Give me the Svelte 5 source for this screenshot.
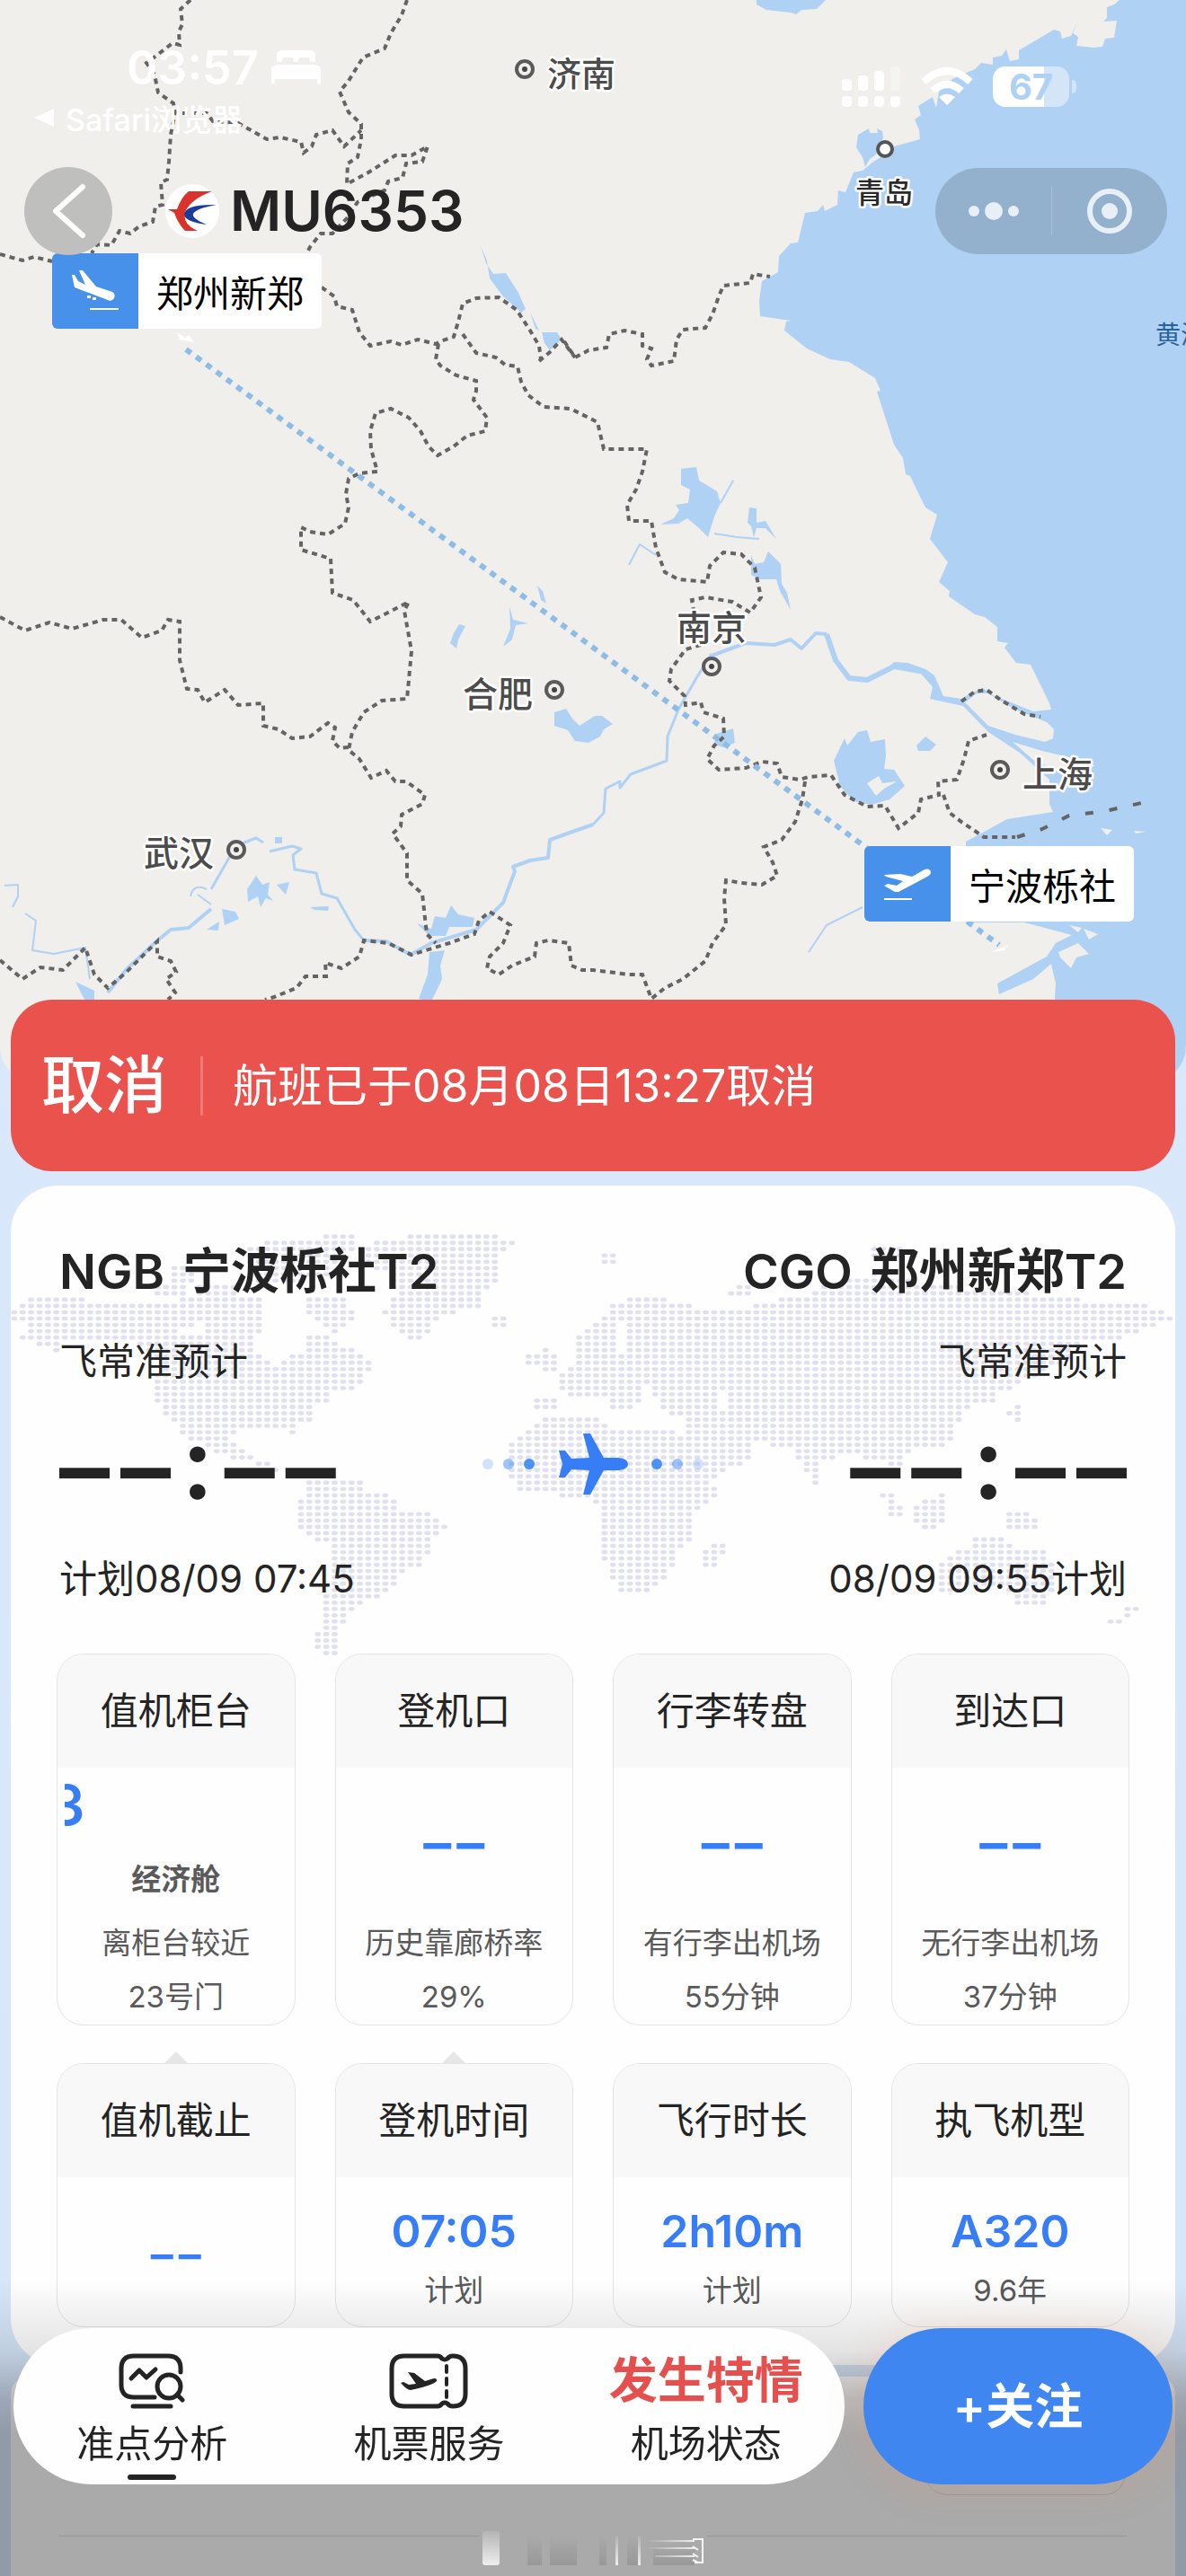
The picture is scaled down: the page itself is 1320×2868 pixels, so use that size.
<script lang="ts">
  type Tile = { title: string; value: string; cabin?: string; notes: string[]; marquee?: boolean; pointer?: boolean };

  const firstRow: Tile[] = [
    { title: '值机柜台', value: '3', cabin: '经济舱', notes: ['离柜台较近', '23号门'], marquee: true },
    { title: '登机口', value: '', notes: ['历史靠廊桥率', '29%'] },
    { title: '行李转盘', value: '', notes: ['有行李出机场', '55分钟'] },
    { title: '到达口', value: '', notes: ['无行李出机场', '37分钟'] }
  ];
  const secondRow: Tile[] = [
    { title: '值机截止', value: '', notes: [], pointer: true },
    { title: '登机时间', value: '07:05', notes: ['计划'], pointer: true },
    { title: '飞行时长', value: '2h10m', notes: ['计划'] },
    { title: '执飞机型', value: 'A320', notes: ['9.6年'] }
  ];

  const cities = [
    { name: '济南', x: 609, y: 96, cx: 584, cy: 77, size: 38 },
    { name: '南京', x: 753, y: 713, cx: 792, cy: 742, size: 39 },
    { name: '上海', x: 1138, y: 876, cx: 1113, cy: 857, size: 39 },
    { name: '合肥', x: 515, y: 787, cx: 617, cy: 768, size: 39 },
    { name: '武汉', x: 160, y: 964, cx: 263, cy: 946, size: 39 }
  ];

  const borders = [
    '212,0 201,10 203,27 199,35 200,50 192,48 170,65 163,70 172,83 176,103 193,115 195,125 190,150 188,180 186,200 179,203 181,228 173,230 170,247 155,252 145,260 133,257 124,273 108,272 102,282',
    '203,126 230,126 237,135 265,137 297,155 312,153 335,158 338,170 347,163 352,150 370,145 383,163 402,145',
    '453,0 447,17 435,37 428,54 404,64 388,90 378,102 388,125 402,138 402,155 398,175 387,182 386,205 410,192 440,173 458,173 476,163 470,180 452,182 448,198 432,202 428,212 398,225 386,243 370,260 357,260 345,275 340,285',
    '0,283 25,290 38,286 58,291',
    '358,320 372,330 375,341 392,345 400,370 412,385 435,380 447,384 465,378 485,383 490,380 505,375 510,358 515,338 530,332 555,331 575,345 590,368 600,385 602,400',
    '515,372 530,393 552,398 562,406 576,408 580,425 588,440 605,453 635,455 655,465 665,470 672,500 720,500 715,525 708,545 698,562 700,580 725,580 730,610 740,637 755,645 787,648 790,630 805,615 825,617 840,632 847,665 835,682 815,670 785,665 770,668 773,685',
    '488,383 485,400 490,407 508,418 530,424 530,435 527,445 542,465 540,480 520,485 505,497 487,507 477,497 468,480 455,465 435,455 418,460 412,480 413,500 420,525 400,527 388,533 385,550 388,565 384,583 365,595 345,592 335,587 335,612 368,622 370,660 393,668 412,692 430,683 455,670 450,680 458,725 453,778 425,780 405,793 392,815 388,835 400,845 413,866 430,858 440,870 452,870 473,885 470,895 447,907 446,920 437,928 453,950 453,980 470,995 475,1040 485,1050',
    '628,380 640,398 655,390 675,387 678,372 695,368 715,372 715,385 725,388 720,400 725,407 750,402 753,378 760,367 785,365 793,350 800,330 805,318 835,315 838,305 857,308',
    '600,402 612,392 625,378 640,398',
    '780,718 763,723 747,745 745,758 762,775 763,785 780,782 783,793 805,800 806,820 795,830 787,845 800,857 830,855 848,848 865,850 870,865 890,868 900,865 925,863 940,885 965,898 985,897 1000,922 1022,905 1025,890 1045,885 1044,870 1065,868 1073,845 1078,825 1098,818',
    '1050,885 1057,905 1070,915 1085,925 1095,932 1130,932',
    '896,870 893,890 885,915 870,935 850,943 860,960 865,975 848,985 825,983 808,980 806,1000 808,1030 793,1050 785,1070 760,1090 740,1100 725,1112 715,1085 700,1085 660,1080 648,1080 636,1075 633,1050 610,1047 597,1050 595,1065 570,1075 555,1085 542,1078 545,1065 560,1050 568,1030 545,1015 533,1025 528,1040 500,1050 458,1063 432,1050 405,1047 400,1065 380,1078 362,1072 363,1087 340,1087 330,1100 305,1110 295,1113',
    '0,687 28,702 55,693 80,700 115,690 135,690 158,710 180,702 187,690 200,692 200,735 208,767 220,768 228,782 250,768 265,785 293,783 293,808 310,812 325,822 345,820 365,805 373,810 370,825 378,833 388,832',
    '0,1069 25,1090 45,1077 70,1080 95,1055 105,1085 120,1100 140,1083 175,1048 175,1065 190,1070 196,1082 185,1090 195,1105 187,1113',
    '1070,781 1085,770 1098,768 1115,780 1140,795 1158,798'
  ];

  // Outlines that decide which dots of the world map are drawn.
  const lands = [
    '90,728 210,728 260,742 440,744 520,728 690,728 700,800 660,850 720,880 740,900 760,865 810,860 815,815 880,820 900,850 950,855 985,890 950,945 880,950 870,978 825,985 820,1022 785,1030 775,1062 760,1050 700,1040 640,1045 600,1060 640,1090 700,1115 745,1145 760,1172 740,1160 700,1130 650,1112 600,1110 545,1085 500,1062 470,1040 430,1000 410,980 410,920 430,890 380,850 330,832 170,832 150,860 110,848 55,828 85,806 28,780 50,744',
    '405,695 500,695 500,725 405,725',
    '450,655 525,655 525,695 450,695',
    '520,695 640,695 640,728 520,728',
    '650,610 750,594 950,580 940,620 900,640 860,680 760,700 650,690',
    '800,725 900,725 940,775 890,815 820,770',
    '960,615 1000,600 1100,582 1300,580 1365,600 1315,625 1325,690 1275,722 1265,755 1155,778 1120,828 1080,828 1035,795 1015,765 1045,720 1030,680 970,650',
    '1280,770 1340,770 1345,798 1305,798',
    '815,1160 965,1158 970,1188 1030,1190 1050,1210 1060,1232 1120,1235 1192,1268 1155,1290 1145,1330 1115,1362 1065,1375 1055,1405 1005,1435 970,1452 935,1468 915,1495 890,1515 895,1575 855,1572 832,1555 835,1520 855,1500 860,1430 880,1400 880,1320 835,1312 785,1275 785,1220 810,1200',
    '1440,1010 1580,1008 1620,1040 1790,1040 1840,1120 1860,1175 1905,1175 1900,1200 1850,1232 1832,1258 1832,1315 1790,1322 1785,1362 1770,1380 1745,1420 1645,1425 1615,1385 1590,1345 1588,1240 1568,1210 1480,1198 1380,1190 1345,1155 1345,1075 1410,1040',
    '1865,1318 1930,1305 1900,1368 1860,1378',
    '1412,962 1495,962 1475,992 1412,992',
    '1390,875 1440,845 1480,882 1465,905 1400,892',
    '1525,828 1568,795 1600,775 1620,745 1690,728 1745,728 1810,748 1870,762 1960,762 2020,745 2060,735 2140,728 2150,712 2240,690 2330,668 2400,690 2560,708 2740,722 2865,732 2870,742 3045,744 3045,758 3108,775 3108,786 3020,802 3010,815 2960,830 2880,828 2830,870 2760,912 2660,950 2620,978 2560,990 2540,1005 2528,1070 2490,1085 2400,1095 2385,1130 2345,1122 2290,1110 2230,1095 2160,1130 2168,1170 2150,1168 2110,1110 2080,1080 2020,1078 1985,1075 1990,1105 1940,1132 1900,1160 1850,1180 1800,1060 1805,1010 1730,1000 1720,965 1690,975 1670,1000 1620,990 1620,960 1560,965 1490,965 1478,930 1455,925 1495,905 1530,870',
    '2320,1185 2370,1190 2395,1260 2350,1240',
    '2420,1228 2450,1205 2515,1185 2505,1250 2470,1275 2418,1272',
    '2660,1232 2725,1238 2750,1278 2665,1275',
    '2500,1345 2550,1325 2590,1292 2660,1292 2690,1325 2765,1325 2785,1370 2795,1410 2765,1452 2690,1455 2650,1412 2560,1415 2500,1438 2478,1400 2478,1352',
    '2975,1452 3020,1455 2970,1495 2920,1515 2905,1502 2960,1485',
    '2640,1010 2690,980 2715,985 2690,1022',
    '1568,620 1630,620 1635,665 1600,655',
    '1930,710 1990,690 2000,725 1930,728',
    '2300,608 2380,608 2380,640 2300,640'
  ].map(parse);
  const seas = ['1635,795 1655,795 1660,870 1625,860', '1700,935 1730,940 1735,990 1700,990', '1905,950 1930,950 1935,985 1908,990', '480,800 530,795 540,815 480,815'].map(parse);

  function parse(points: string): number[][] {
    return points.split(' ').map((p) => p.split(',').map(Number));
  }
  function inside(x: number, y: number, poly: number[][]): boolean {
    let hit = false;
    for (let i = 0, j = poly.length - 1; i < poly.length; j = i++) {
      const [xi, yi] = poly[i];
      const [xj, yj] = poly[j];
      if (yi > y !== yj > y && x < ((xj - xi) * (y - yi)) / (yj - yi) + xi) hit = !hit;
    }
    return hit;
  }
  const dots: { x: number; y: number }[] = [];
  for (let y = 587; y < 1580; y += 14.9) {
    for (let x = 38; x < 3110; x += 22.3) {
      if (lands.some((l) => inside(x, y, l)) && !seas.some((s) => inside(x, y, s))) dots.push({ x, y });
    }
  }
</script>

{#snippet tile(t: Tile)}
  <article class="tile" class:pointer={t.pointer}>
    <h3>{t.title}</h3>
    <div class="body">
      {#if t.marquee}
        <div class="marquee"><strong>{t.value}</strong></div>
      {:else if t.value}
        <strong class="value">{t.value}</strong>
      {:else}
        <strong class="value empty"><span>–</span><span>–</span></strong>
      {/if}
      {#if t.cabin}<b class="cabin">{t.cabin}</b>{/if}
      {#each t.notes as note}<p>{note}</p>{/each}
    </div>
  </article>
{/snippet}

{#snippet noTime()}
  <p class="time"><span>–</span><span>–</span><span>:</span><span>–</span><span>–</span></p>
{/snippet}

<div class="page">
  <header class="hero">
    <div class="map">
      <svg viewBox="0 0 1320 1205" preserveAspectRatio="xMidYMin slice" aria-label="航线地图">
        <rect width="1320" height="1205" fill="#f0efeb" />
        <g fill="#afd1f4">
          <path d="M842 0V5L853 11 880 14 886 16 892 11 909 10 919 0Z" />
          <path d="M1246 0L1240 5 1232 8V20L1228 24 1243 23 1240 42 1230 43 1227 52 1217 53 1198 51 1200 41 1194 37 1200 22 1192 40 1182 43 1180 35 1173 33 1134 56V66L1124 68 1120 55 1115 62 1105 64V72L1092 70 1085 77 1060 88 1045 102 1042 120 1038 108 1022 118 1025 128 1018 133 1023 145 1024 155 995 163 985 172 972 180 960 190 950 192 941 214 933 212 932 228 918 235 916 228 910 235 896 237 888 270 880 271 867 285 866 303 848 313 845 335 846 352 880 357 875 358 873 368 898 388 924 400 945 403 974 421 980 435 976 436 995 495 1005 510 1008 528 1013 530 1030 565 1043 573 1035 600 1055 626 1045 648 1057 658 1056 664 1085 684 1096 687 1110 698V714L1122 716 1118 721 1131 738 1147 740 1168 783 1170 790 1150 792 1105 774 1094 766 1080 772 1070 778 1050 775 1040 752 1030 745 1010 738 995 737 990 742 1010 745 1025 750 1038 765 1035 778 1072 786 1100 815 1135 838 1168 868 1168 895 1172 904 1121 912 1075 937V1027H1140L1193 1041 1175 1050 1165 1065 1110 1095 1112 1107 1150 1090 1170 1073 1175 1095 1168 1205H1320V0Z" />
          <path d="M955 186L953 200 960 211 963 222 968 213 975 208 978 196 983 190 982 182 976 179 977 184 968 184 967 179Z" transform="translate(0 -36)" />
          <path d="M758 522L775 520 778 535 798 547 802 560 795 575 788 598 778 588 765 577 755 583 735 584 750 577 756 568 752 562 766 560 768 545 758 540Z" />
          <path d="M834 565L842 566 842 582 852 580 864 600 852 588 842 588 839 598 836 586 832 582ZM836 618L840 628 850 626 855 614 869 628 870 650 876 660 880 679 868 658 864 645 846 645 836 640Z" />
          <path d="M928 847L940 822 943 830 955 815 965 813 969 826 985 823 986 842 984 856 995 857 1007 875 990 890 970 896 950 892 935 875Z" />
          <path d="M617 793L630 789 637 800 645 808 662 797 670 797 682 806 672 812 668 820 655 827 640 825 632 813 617 808Z" />
          <path d="M797 817L816 811 818 827 805 832 795 829ZM1020 830L1030 820 1042 829 1035 836 1022 836Z" />
          <path d="M535 274L542 290 545 310 560 330 580 348 585 344 577 326 570 315 563 304 549 305 541 293ZM603 370L620 370 625 378 612 390 606 382ZM590 348L600 368 596 366Z" />
          <path d="M505 705L511 695 518 697 510 712 508 722 501 716ZM567 675L571 690 588 694 574 696 570 712 560 720 568 700ZM598 652L604 658 608 672 602 668Z" />
          <path d="M464 1028L480 1034 484 1020 496 1022 502 1008 510 1018 528 1022 526 1032 500 1032 496 1042 478 1042ZM478 1060L495 1058 490 1075 492 1090 480 1115 466 1112 476 1085Z" />
          <path d="M275 990L285 975 292 985 300 982 298 996 304 1003 296 1000 290 1010 287 998 276 1004ZM308 985L322 982 318 996ZM247 1012L262 1015 266 1023 250 1030ZM230 1035L244 1026 243 1036ZM306 932H314V939H306ZM345 1010L366 1009 365 1014 350 1013ZM84 1093L105 1103V1115H95Z" />
        </g>
        <g fill="none" stroke="#afd1f4" stroke-width="3" stroke-linejoin="round">
          <path stroke-width="4" d="M120 1105L140 1080 172 1050 190 1035 210 1033 235 1012M300 903" />
          <path d="M235 990L255 955 272 938 285 933 293 938M300 902M300 948L325 942 335 945 326 952 328 968 352 972 358 995 375 1000 395 1035 405 1047" />
          <path stroke-width="4" d="M405 1047L430 1048 457 1063 480 1050 530 1035 560 1005 573 970 571 965 590 958 610 955 612 935 640 925 660 918" />
          <path stroke-width="2" d="M5 986L20 985 20 998 14 1010M28 1017L40 1025 36 1058 60 1062 95 1055 100 1090M212 998Q215 983 230 990M220 996L235 1007" />
          <path stroke-width="3" d="M660 918L672 905 674 878 690 870 690 877 702 862 742 847 743 820 755 790 775 755 792 728" />
          <path stroke-width="2" d="M795 594L820 598 845 600M700 629L712 606 730 618M802 560L816 535M900 1060L920 1030 960 1010" />
          <path stroke-width="4" d="M792 730L830 716 862 718 880 712 892 722 908 705 920 706" />
          <path stroke-width="6" d="M920 706L930 735 945 755 965 757 995 742 1030 748" />
        </g>
        <g fill="#f0efeb">
          <path d="M1074 782L1087 772 1100 772 1130 790 1165 804 1173 812 1172 822 1163 826 1130 818 1100 808Z" />
          <path d="M1127 826L1160 836 1190 843 1218 852 1205 864 1180 860 1150 846Z" />
          <path d="M965 872L978 864 982 872 998 870 984 878 975 886ZM1225 922L1238 924 1232 930ZM1262 925L1275 926 1264 928ZM1178 1060L1200 1050 1212 1062 1198 1066 1192 1078 1180 1066ZM1206 1034L1222 1040 1212 1046ZM1190 1030L1204 1033 1200 1038Z" />
        </g>
        <g class="borders">
          {#each borders as points}<polyline {points} />{/each}
          <polyline points="1132,932 1160,923 1190,908 1230,903 1275,893" stroke-dasharray="9 18" />
        </g>
        <line x1="207" y1="389" x2="1112" y2="1052" stroke="#8dbce6" stroke-width="6" stroke-dasharray="7 7" />
        <g class="places">
          {#each cities as c}
            <circle cx={c.cx} cy={c.cy} r="9" fill="#f0efeb" stroke="#5a5a5a" stroke-width="4" />
            <circle cx={c.cx} cy={c.cy} r="3" fill="#444" />
            <text x={c.x} y={c.y} font-size={c.size}>{c.name}</text>
          {/each}
          <circle cx="985" cy="166" r="8" fill="#fff" stroke="#555" stroke-width="4" />
          <text class="dark" x="952" y="226" font-size="32">青岛</text>
          <text class="sea" x="1286" y="383" font-size="28">黄海</text>
        </g>
        <path d="M197 370L206 376 210 373 216 381 200 378ZM1104 1060L1122 1052 1118 1058Z" fill="#fff" />
      </svg>
      <div class="pin arrival">
        <svg viewBox="0 0 96 84" aria-hidden="true">
          <path d="M22 24L25 38 62 52a5 5 0 0 0 5-9L49 37 34 19 30 19 37 35 29 31 25 24Z" fill="#fff" />
          <path d="M39 47h4v3h-4zM45 49h4v3h-4zM42 61h32v2h-32z" fill="#fff" />
        </svg>
        <span>郑州新郑</span>
      </div>
      <div class="pin departure">
        <svg viewBox="0 0 96 84" aria-hidden="true">
          <path d="M22 32L40 31 53 34 67 26Q73 24 74 29Q74 32 70 34L38 51 34 51 22 44 26 42 36 44 43 39 24 34Z" fill="#fff" />
          <path d="M22 58h31v2h-31z" fill="#fff" />
        </svg>
        <span>宁波栎社</span>
      </div>
    </div>

    <div class="chrome">
      <div class="status">
        <div class="left">
          <div class="clock">
            <time>03:57</time>
            <svg width="55" height="38" viewBox="0 0 55 38" fill="#fff" aria-label="睡眠模式">
              <path d="M6 13V6Q6 0 12 0H43Q49 0 49 6V13H43V11Q43 8 40 8H33Q30 8 30 11V13H25V11Q25 8 22 8H15Q12 8 12 11V13Z" />
              <path d="M6 16H49Q55 16 55 22V36Q55 38 53 38T51 36V32H4V36Q4 38 2 38T0 36V22Q0 16 6 16Z" />
            </svg>
          </div>
          <a class="return" href="#safari"><svg width="22" height="20" viewBox="0 0 22 20" aria-hidden="true"><path d="M0 10L22 0V20Z" fill="#fff" /></svg>Safari浏览器</a>
        </div>
        <div class="right">
          <svg width="66" height="46" viewBox="0 0 66 46" fill="#fff" aria-label="信号">
            <rect y="14" width="11" height="13" rx="4" /><rect x="18" y="10" width="11" height="17" rx="4" /><rect x="36" y="5" width="11" height="22" rx="4" />
            <rect x="54" width="11" height="27" rx="4" opacity="0.3" />
            <rect y="33" width="11" height="12" rx="4" /><rect x="18" y="33" width="11" height="12" rx="4" /><rect x="36" y="33" width="11" height="12" rx="4" /><rect x="54" y="33" width="11" height="12" rx="4" />
          </svg>
          <svg width="60" height="46" viewBox="0 0 60 46" fill="none" stroke="#fff" stroke-width="8" aria-label="无线网络">
            <path d="M4 17Q30 -7 56 17" /><path d="M14 27Q30 13 46 27" />
            <path d="M21 34Q30 27 39 34L30 43Z" fill="#fff" stroke="none" />
          </svg>
          <div class="battery"><span>67</span></div>
        </div>
      </div>

      <nav class="nav">
        <button class="back" aria-label="返回">
          <svg width="40" height="66" viewBox="0 0 40 66" fill="none" stroke="#fff" stroke-width="6" stroke-linecap="round" stroke-linejoin="round"><path d="M36 6L6 33 36 60" /></svg>
        </button>
        <svg class="logo" viewBox="0 0 60 60" aria-label="中国东方航空">
          <circle cx="30" cy="30" r="30" fill="#fff" />
          <path d="M3 28H13Q18 14 26 8H52Q30 16 23 29Q17 44 36 52H22Q14 44 10 32Z" fill="#d9332b" />
          <path d="M57 23Q22 22 21 34Q22 42 46 45Q29 38 31 33Q34 27 57 23Z" fill="#1b3c98" />
        </svg>
        <h1>MU6353</h1>
        <div class="capsule">
          <button aria-label="更多"><svg width="60" height="54" viewBox="0 0 60 54" fill="#e8eff7"><circle cx="8" cy="27" r="6" /><circle cx="30" cy="27" r="10" /><circle cx="52" cy="27" r="6" /></svg></button>
          <button aria-label="关闭"><svg width="54" height="54" viewBox="0 0 54 54"><circle cx="27" cy="27" r="22" fill="none" stroke="#e8eff7" stroke-width="6" /><circle cx="27" cy="27" r="9" fill="#e8eff7" /></svg></button>
        </div>
      </nav>
    </div>
  </header>

  <main>
    <section class="banner">
      <h2>取消</h2>
      <p>航班已于08月08日13:27取消</p>
    </section>

    <section class="card">
      <svg class="world" viewBox="29 575 3079 1005" preserveAspectRatio="none" aria-hidden="true">
        {#each dots as d}<ellipse cx={d.x} cy={d.y} rx="8" ry="5" />{/each}
      </svg>
      <div class="route">
        <div class="end">
          <h2><span>NGB</span><span>宁波栎社T2</span></h2>
          <p class="source">飞常准预计</p>
          {@render noTime()}
          <p class="plan">计划08/09 07:45</p>
        </div>
        <svg class="plane" width="248" height="70" viewBox="0 0 248 70" aria-hidden="true">
          <g fill="#4a93f5">
            <circle cx="7" cy="34" r="6" opacity="0.25" /><circle cx="30" cy="34" r="6" opacity="0.55" /><circle cx="53" cy="34" r="6" />
            <circle cx="195" cy="34" r="6" /><circle cx="218" cy="34" r="6" opacity="0.55" /><circle cx="241" cy="34" r="6" opacity="0.25" />
          </g>
          <path transform="translate(86 0)" d="M77 34Q77 40 66 41H50L35 68H27L34 41 14 40 7 49H0L4 34 0 19H7L14 28 34 27 27 0H35L50 27H66Q77 28 77 34Z" fill="#377df6" />
        </svg>
        <div class="end to">
          <h2><span>CGO</span><span>郑州新郑T2</span></h2>
          <p class="source">飞常准预计</p>
          {@render noTime()}
          <p class="plan">08/09 09:55计划</p>
        </div>
      </div>
      <div class="tiles tall">
        {#each firstRow as t}{@render tile(t)}{/each}
      </div>
      <div class="tiles">
        {#each secondRow as t}{@render tile(t)}{/each}
      </div>
    </section>

    <section class="card next">
      <div class="chip"></div>
      <div class="rule">
        <hr />
        <svg width="254" height="48" viewBox="0 0 254 48" aria-hidden="true">
          <defs>
            <linearGradient id="bar" x1="0" y1="0" x2="0" y2="1"><stop offset="0" stop-color="#b4b4b4" /><stop offset="1" stop-color="#eee" /></linearGradient>
            <linearGradient id="smear" x1="0" y1="0" x2="0" y2="1"><stop offset="0" stop-color="#ababab" /><stop offset="1" stop-color="#989898" /></linearGradient>
            <linearGradient id="streak"><stop offset="0" stop-color="#ababab" /><stop offset="1" stop-color="#eee" /></linearGradient>
          </defs>
          <rect x="4" y="4" width="19" height="38" rx="3" fill="url(#bar)" />
          <rect x="54" y="8" width="16" height="34" fill="url(#smear)" /><rect x="79" y="8" width="30" height="34" fill="url(#smear)" />
          <rect x="134" y="8" width="8" height="34" fill="url(#smear)" /><rect x="165" y="8" width="12" height="34" fill="url(#smear)" /><rect x="194" y="16" width="46" height="26" fill="url(#smear)" />
          <rect x="152" y="10" width="3" height="32" fill="url(#bar)" /><rect x="177" y="10" width="3" height="32" fill="url(#bar)" />
          <path d="M188 14h52v2h-52zM188 22h52v2h-52zM196 31h44v2h-44z" fill="url(#streak)" />
          <path d="M238 13h11v26h-9M238 21l6 4M238 29l6 4M238 36l6 3" fill="none" stroke="#f5f5f5" stroke-width="2" />
        </svg>
        <hr />
      </div>
    </section>
  </main>

  <div class="shade"></div>
  <footer class="dock">
    <div class="menu">
      <button class="active">
        <svg width="74" height="62" viewBox="0 0 74 62" fill="none" stroke="#242424" stroke-width="5" stroke-linecap="round" stroke-linejoin="round" aria-hidden="true">
          <path d="M40 49H17Q3 49 3 35V17Q3 3 17 3H55Q69 3 69 17V21" /><path d="M14 28L23 19 31 27 41 18" /><circle cx="56" cy="37" r="13" /><path d="M65 46L71 52M16 59H58" />
        </svg>
        <span>准点分析</span>
      </button>
      <button>
        <svg width="88" height="62" viewBox="0 0 88 62" fill="none" stroke="#242424" stroke-width="5" stroke-linecap="round" stroke-linejoin="round" aria-hidden="true">
          <path d="M17 3H54Q57 3 59 6Q62 8 65 6Q67 3 71 3Q85 3 85 17V45Q85 59 71 59Q67 59 65 56Q62 54 59 56Q57 59 54 59H17Q3 59 3 45V17Q3 3 17 3Z" />
          <path d="M64 14V21M64 28V35M64 42V49" stroke-width="4" />
          <path d="M21 21L28 22 40 31 50 28Q54 28 53 31Q48 36 24 41Q20 41 13 33L16 32 22 35 30 34Z" fill="#242424" stroke="none" />
        </svg>
        <span>机票服务</span>
      </button>
      <button>
        <b>发生特情</b>
        <span>机场状态</span>
      </button>
    </div>
    <button class="follow">+关注</button>
  </footer>
</div>

<style>
  :global(body) { margin: 0; background: #dbe9fb; }
  .page {
    display: flex; flex-direction: column; min-height: 100vh; overflow: hidden;
    font-family: Inter, "Noto Sans CJK SC", sans-serif; color: #242424;
    background: linear-gradient(#dce8fb, #d6e7fa);
  }
  h1, h2, h3, p { margin: 0; font-weight: 400; }
  button { border: 0; padding: 0; background: none; font: inherit; color: inherit; cursor: pointer; }
  svg { display: block; flex: none; }

  .hero { display: grid; }
  .map, .chrome { grid-area: 1 / 1; }
  .map { position: relative; overflow: hidden; border-radius: 0 0 40px 40px; }
  .map > svg { width: 100%; height: auto; }
  .borders { fill: none; stroke: #646464; stroke-width: 4; stroke-dasharray: 6 5; }
  .places { font-weight: 500; fill: #4c4c4c; }
  .places text { stroke: #fff; stroke-width: 5; paint-order: stroke; stroke-linejoin: round; }
  .places .dark { fill: #2a2a2a; }
  .places .sea { fill: #2a639b; stroke: none; font-weight: 400; }

  .pin { position: absolute; display: flex; align-items: center; width: 300px; height: 84px; border-radius: 6px; overflow: hidden; background: #fff; color: #000; font-size: 41px; }
  .pin svg { width: 96px; height: 84px; background: #4791ea; }
  .pin span { flex: 1; text-align: center; }
  .arrival { left: 58px; top: 282px; }
  .departure { left: 962px; top: 942px; }

  .chrome { z-index: 1; color: #fff; height: 284px; }
  .status { display: flex; justify-content: space-between; height: 186px; box-sizing: border-box; padding: 45px 130px 0 38px; }
  .clock { display: flex; align-items: center; gap: 14px; height: 60px; padding-left: 103px; font-size: 52px; font-weight: 600; }
  .return { display: flex; align-items: center; gap: 13px; height: 52px; color: #fff; font-size: 34px; font-weight: 500; text-decoration: none; }
  .right { display: flex; align-items: flex-start; gap: 21px; padding-top: 29px; }
  .battery { position: relative; width: 85px; height: 45px; border-radius: 14px; background: linear-gradient(90deg, #fff 67%, #d5e5f8 67%); color: #afd1f4; font-size: 40px; font-weight: 700; line-height: 45px; text-align: center; }
  .battery::after { content: ""; position: absolute; right: -8px; top: 15px; width: 5px; height: 15px; border-radius: 0 5px 5px 0; background: #d5e5f8; }

  .nav { display: flex; align-items: center; padding: 0 21px 0 27px; }
  .back { display: grid; place-items: center; width: 98px; height: 98px; border-radius: 50%; background: #bfbfbd; }
  .logo { width: 60px; height: 60px; margin: 0 12px 0 59px; }
  .nav h1 { color: #242424; font-size: 62px; font-weight: 600; line-height: 76px; }
  .capsule { display: flex; width: 258px; height: 96px; margin-left: auto; border-radius: 48px; background: rgba(0, 0, 0, 0.155); }
  .capsule button { flex: 1; display: grid; place-items: center; }
  .capsule button + button { background: linear-gradient(rgba(255, 255, 255, 0.2), rgba(255, 255, 255, 0.2)) left center / 1px 54px no-repeat; }

  main { display: flex; flex-direction: column; flex: 1; margin-top: -92px; padding: 0 12px; }
  .banner { position: relative; display: flex; align-items: center; height: 191px; border-radius: 46px; background: #ea524e; color: #fff; }
  .banner h2 { padding: 0 37px 0 34px; font-size: 70px; line-height: 66px; font-weight: 500; border-right: 3px solid #ee7a77; }
  .banner p { padding-left: 33px; font-size: 50px; line-height: 70px; }

  .card { position: relative; margin-top: 16px; border-radius: 52px; background: #fefefe; }
  .world { position: absolute; left: 0; top: 51px; width: 100%; height: 474px; fill: #e0e0f0; }
  .route { position: relative; display: flex; justify-content: space-between; padding: 56px 54px 0; }
  .route h2 { display: flex; gap: 20px; font-size: 54px; line-height: 80px; font-weight: 600; }
  .source { font-size: 42px; line-height: 62px; margin-top: 29px; }
  .time { display: flex; gap: 12px; font-size: 112px; line-height: 130px; margin-top: 28px; font-weight: 600; font-feature-settings: "case"; }
  .plan { font-size: 42px; line-height: 62px; margin-top: 22px; }
  .to { text-align: right; }
  .to h2, .to .time { justify-content: flex-end; }
  .end { flex: 1; }
  .plane { margin-top: 220px; }

  .tiles { position: relative; display: grid; grid-template-columns: repeat(4, 1fr); gap: 44px; padding: 42px 51px; }
  .tiles.tall { padding: 52px 51px 0; }
  .tile { position: relative; box-sizing: border-box; border: 1px solid #e4e4e4; border-radius: 30px; background: #fefefe; text-align: center; }
  .tile h3 { height: 126px; border-radius: 29px 29px 0 0; background: #f8f8f8; font-size: 42px; line-height: 126px; }
  .pointer::before { content: ""; position: absolute; left: calc(50% - 14px); top: -14px; border: 14px solid transparent; border-top: 0; border-bottom-color: #e6e6e6; }
  .body { display: flex; flex-direction: column; height: 166px; box-sizing: border-box; padding-top: 22px; }
  .body strong { color: #377df6; font-weight: 600; font-feature-settings: "case"; }
  .value { font-size: 50px; line-height: 76px; }
  .empty { display: flex; justify-content: center; gap: 6px; }
  .value:only-child { line-height: 134px; }
  .body p { color: #5a5a5a; font-size: 33px; line-height: 56px; }
  .tall .body { height: 286px; padding-top: 0; }
  .tall .value { height: 165px; font-size: 62px; line-height: 176px; }
  .tall .body p { line-height: 60px; }
  .marquee { margin: 0 8px; overflow: hidden; text-align: left; font-size: 62px; line-height: 84px; }
  .marquee strong { margin-left: -17px; }
  .cabin { color: #5a5a5a; font-size: 33px; line-height: 81px; }

  .next { flex: 1; margin-top: 13px; border-radius: 20px 20px 0 0; }
  .chip { width: 223px; height: 100px; box-sizing: border-box; margin: 32px 55px 36px auto; border: 1px solid #e0e0e0; border-radius: 24px; }
  .rule { display: flex; align-items: flex-start; padding: 0 54px 0 53px; }
  .rule hr { flex: 1; height: 1px; margin: 9px 0 0; border: 0; background: #e0e0e0; }
  .rule svg { position: relative; z-index: 1; }

  .shade { position: fixed; left: 0; right: 0; bottom: 0; height: 330px; background: linear-gradient(transparent, rgba(0, 0, 0, 0.1) 24%, rgba(0, 0, 0, 0.27) 40%, rgba(0, 0, 0, 0.33) 52%); pointer-events: none; }
  .dock { position: fixed; z-index: 2; left: 15px; right: 15px; bottom: 102px; display: flex; gap: 21px; height: 174px; }
  .menu { flex: 925; display: grid; grid-template-columns: repeat(3, 1fr); border-radius: 87px; background: #fefefe; }
  .menu button { position: relative; display: flex; flex-direction: column; align-items: center; padding-top: 28px; font-size: 42px; }
  .menu span { line-height: 62px; margin-top: 8px; }
  .menu b { height: 62px; color: #e5504f; font-size: 54px; line-height: 62px; font-weight: 700; }
  .active::after { content: ""; position: absolute; left: calc(50% - 27px); bottom: 5px; width: 54px; height: 6px; border-radius: 3px; background: #242424; }
  .follow { flex: 344; padding-bottom: 8px; border-radius: 87px; background: #3f86f1; color: #fff; font-size: 54px; font-weight: 600; box-shadow: 0 4px 40px rgba(240, 140, 100, 0.22); }
</style>
